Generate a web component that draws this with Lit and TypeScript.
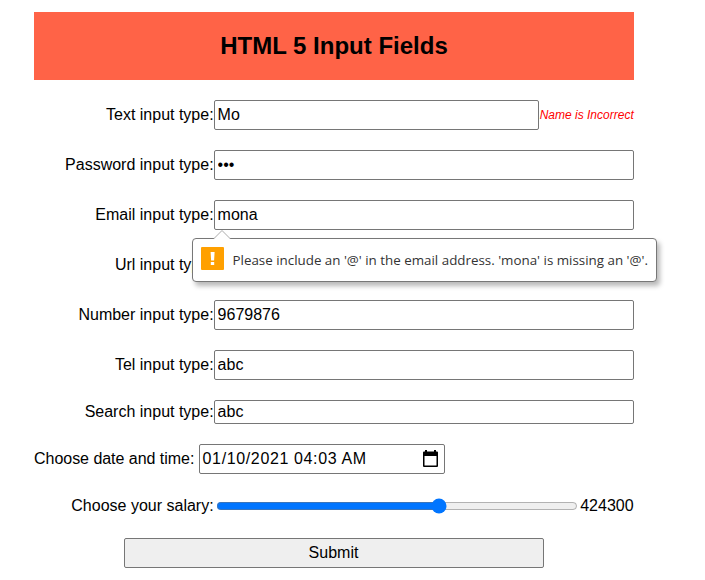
import { LitElement, html, css } from "lit";
import { customElement } from "lit/decorators.js";

@customElement("validation-bubble")
class ValidationBubble extends LitElement {
  static styles = css`
    :host {
      position: absolute;
      left: -22px;
      top: 38px;
      z-index: 1;
      box-sizing: border-box;
      display: flex;
      align-items: center;
      width: 465px;
      height: 44px;
      padding-left: 8px;
      background: #fff;
      border: 1px solid #777;
      border-radius: 4px;
      box-shadow: 3px 4px 5px rgba(0, 0, 0, 0.28);
    }
    .arrow {
      position: absolute;
      left: 20px;
      top: -9px;
    }
    .icon {
      flex: none;
      margin: -4px 8.5px 0 0;
    }
    .text {
      font: 13.36px/18px "Open Sans", "Noto Sans", sans-serif;
      color: #333;
      white-space: nowrap;
    }
  `;
  render() {
    return html`
      <svg class="arrow" width="18" height="10" viewBox="0 0 18 10">
        <path d="M1 8.500 L9 0.500 L17 8.500 V10 H1Z" fill="#fff" />
        <path d="M1 8.500 L9 0.500 L17 8.500" fill="none" stroke="#aaa" />
      </svg>
      <svg class="icon" width="23" height="23" viewBox="0 0 23 23">
        <rect width="23" height="23" rx="1" fill="#ffa000" />
        <path d="M9.6 5h4l-.5 8.5h-3zM9.8 15h3.4v3H9.8z" fill="#fff" />
      </svg>
      <span class="text"><slot></slot></span>
    `;
  }
}

@customElement("app-root")
class AppRoot extends LitElement {
  static styles = css`
    :host {
      display: block;
      height: 580px;
      overflow: hidden;
      background: #fff;
      color: #000;
      font: 16px/18px "Liberation Sans", Arial, sans-serif;
    }
    .form {
      box-sizing: border-box;
      display: flex;
      flex-direction: column;
      gap: 20px;
      width: 600px;
      margin-left: 34px;
      padding-top: 12px;
    }
    .title {
      display: flex;
      align-items: center;
      justify-content: center;
      height: 68px;
      margin: 0;
      background: tomato;
      font-size: 24px;
      line-height: 28px;
    }
    .row {
      display: flex;
      align-items: center;
      height: 30px;
    }
    .row.short {
      height: 24px;
    }
    .label {
      box-sizing: border-box;
      flex: none;
      width: 180px;
      padding-right: 0.4px;
      text-align: right;
      white-space: nowrap;
    }
    .label.inline {
      width: 165px;
      letter-spacing: -0.03px;
      text-align: left;
    }
    .field {
      position: relative;
      display: flex;
      flex: 1;
      min-width: 0;
      height: 100%;
    }
    .input {
      box-sizing: border-box;
      flex: 1;
      min-width: 0;
      height: 100%;
      margin: 0;
      padding: 1px 2px 1px 2.6px;
      border: 1px solid #767676;
      border-radius: 2px;
      background: #fff;
      color: #000;
      font: inherit;
      outline: none;
    }
    .input.date {
      display: flex;
      flex: none;
      align-items: center;
      justify-content: space-between;
      width: 246px;
      padding-right: 5px;
      white-space: pre;
      letter-spacing: 0.63px;
    }
    .error {
      flex: none;
      width: 95px;
      box-sizing: border-box;
      padding-left: 0.7px;
      color: red;
      font-size: 12px;
      font-style: italic;
      white-space: nowrap;
    }
    .range {
      flex: 1;
      min-width: 0;
      margin: 2px;
      accent-color: #0075ff;
    }
    .row.salary {
      height: 24px;
    }
    .amount {
      margin-right: 0.4px;
    }
    .submit {
      width: 420px;
      height: 30px;
      margin: 0 0 0 90px;
      padding: 0 1px 0 0;
      border: 1px solid #767676;
      border-radius: 2px;
      background: #efefef;
      color: #000;
      font: inherit;
    }
  `;

  row(label: string, type: string, value: string, extra: unknown = "", cls = "") {
    return html`
      <div class="row ${cls}">
        <label class="label">${label}</label>
        <div class="field">
          <input class="input" type=${type} .value=${value} />
          ${extra}
        </div>
      </div>
    `;
  }

  render() {
    return html`
      <div class="form">
        <h2 class="title">HTML 5 Input Fields</h2>
        <div class="row">
          <label class="label">Text input type:</label>
          <div class="field"><input class="input" type="text" .value=${"Mo"} /></div>
          <span class="error">Name is Incorrect</span>
        </div>
        ${this.row("Password input type:", "password", "abc")}
        ${this.row(
          "Email input type:",
          "email",
          "mona",
          html`<validation-bubble>Please include an '@' in the email address. 'mona' is missing an '@'.</validation-bubble>`
        )}
        ${this.row("Url input type:", "url", "")}
        ${this.row("Number input type:", "number", "9679876")}
        ${this.row("Tel input type:", "tel", "abc")}
        ${this.row("Search input type:", "search", "abc", "", "short")}
        <div class="row">
          <label class="label inline">Choose date and time:</label>
          <div class="input date" tabindex="0">
            <span>01/10/2021 04:03 AM</span>
            <svg width="17" height="18" viewBox="0 0 17 18">
              <path
                fill="#000"
                fill-rule="evenodd"
                d="M3 0h2v1.500h7V0h2v1.500h1a1 1 0 0 1 1 1V16a1 1 0 0 1-1 1H2a1 1 0 0 1-1-1V2.500a1 1 0 0 1 1-1h1zM2.500 6v9.500h12V6z"
              />
            </svg>
          </div>
        </div>
        <div class="row salary">
          <label class="label">Choose your salary:</label>
          <input class="range" type="range" min="50000" max="651500" step="100" .value=${"424300"} />
          <span class="amount">424300</span>
        </div>
        <button class="submit">Submit</button>
      </div>
    `;
  }
}
